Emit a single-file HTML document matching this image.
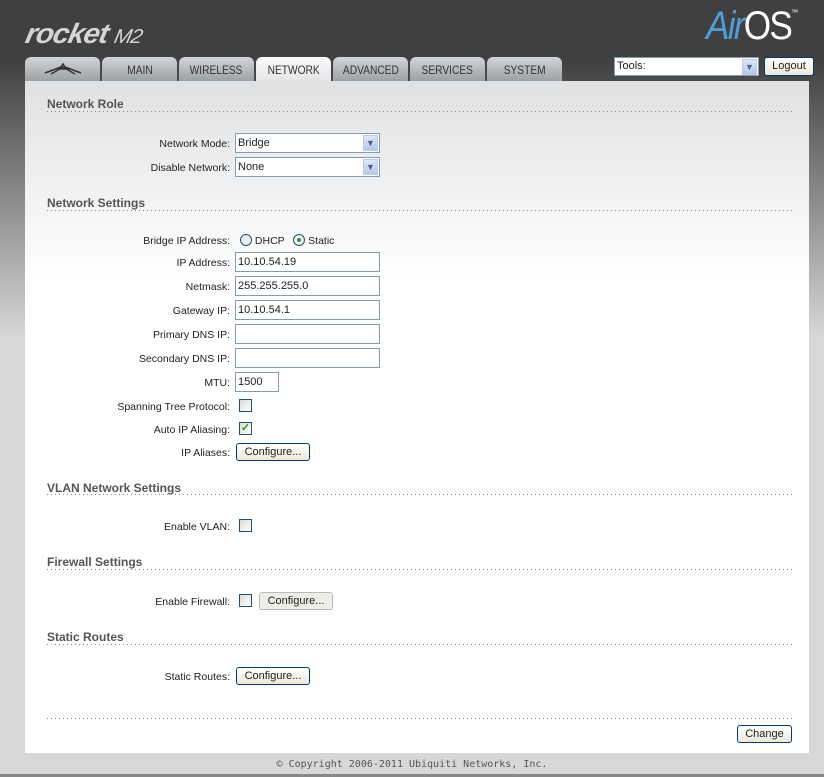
<!DOCTYPE html>
<html><head><meta charset="utf-8"><style>
*{box-sizing:border-box;margin:0;padding:0}
body{width:824px;height:777px;overflow:hidden;position:relative;font-family:"Liberation Sans",Tahoma,sans-serif;font-size:11px;color:#222;
background:linear-gradient(#404040 0,#404040 60px,#d8d8d8 340px,#d8d8d8 100%)}
.a{position:absolute}
.tab{position:absolute;top:57px;height:24px;width:75px;border-radius:6px 6px 0 0;background:linear-gradient(#d3d5d7,#9da0a4);color:#333;font-size:12px;text-align:center;line-height:26px}
.tab span{display:inline-block;transform:scaleX(.85)}
.tab.on{background:linear-gradient(#fafafa,#e2e4e6);height:25px}
#panel{position:absolute;left:25px;top:81px;width:784px;height:672px;background:linear-gradient(#dfe1e3 0,#fff 200px,#fff)}
.h{position:absolute;left:47px;font-weight:bold;font-size:12px;color:#555}
.dl{position:absolute;left:47px;width:748px;height:1px;background:repeating-linear-gradient(90deg,#888 0,#888 1px,transparent 1px,transparent 4px)}
.l{position:absolute;right:594px;text-align:right;white-space:nowrap;line-height:14px;font-size:10.5px}
.in{position:absolute;left:235px;width:145px;height:20px;border:1px solid #7f9db9;background:#fff;padding-left:2px;line-height:18px}
.sel .ar{position:absolute;right:1px;top:1px;width:15px;height:16px;background:linear-gradient(#dce6f8,#b4c8ec);border:1px solid #bccbe8;color:#4d6185;font-size:9px;text-align:center;line-height:14px}
.cb{position:absolute;left:239px;width:13px;height:13px;border:1px solid #1c5180;background:linear-gradient(135deg,#dcdcd4,#fff)}
.btn{position:absolute;height:18px;border:1px solid #003c74;border-radius:3px;background:linear-gradient(#fff,#ece9d8);text-align:center;line-height:16px;font-size:11px}
.rd{display:inline-block;width:12px;height:12px;border:1px solid #1c5180;border-radius:50%;vertical-align:-2px;background:#f0f0ea;position:relative}
</style></head><body>
<div class="a" style="left:26px;top:18px;font-size:28px;font-weight:bold;font-style:italic;color:#d4d4d4;letter-spacing:-1px;font-family:'Liberation Sans',sans-serif;transform:skewX(-12deg) scaleX(1.05);transform-origin:left">rocket <span style="font-size:20px;font-weight:normal">M2</span></div>
<div class="a" style="left:706px;top:4px;font-size:40px;font-family:'Liberation Sans',sans-serif;letter-spacing:-2px;transform:scaleX(.88);transform-origin:left"><span style="color:#4a9fd6;font-style:italic">Air</span><span style="color:#fff">OS</span><sup style="color:#fff;font-size:8px;vertical-align:24px">™</sup></div>
<div class="tab" style="left:25px"><svg width="40" height="14" viewBox="0 0 40 14" style="margin-top:5px"><path d="M2 11 L18 5 L20 2 L22 5 L38 11 M8 12 L20 5 L32 12 M14 7 L26 7" stroke="#333" stroke-width="1.5" fill="none"/></svg></div>
<div class="tab" style="left:102px"><span>MAIN</span></div>
<div class="tab" style="left:179px"><span>WIRELESS</span></div>
<div class="tab on" style="left:256px"><span>NETWORK</span></div>
<div class="tab" style="left:333px"><span>ADVANCED</span></div>
<div class="tab" style="left:410px"><span>SERVICES</span></div>
<div class="tab" style="left:487px"><span>SYSTEM</span></div>
<div class="in sel" style="left:614px;top:57px;width:145px;height:19px;line-height:17px">Tools:<div class="ar">▼</div></div>
<div class="btn" style="left:764px;top:57px;width:50px;height:19px">Logout</div>
<div id="panel"></div>

<div class="h" style="top:97px">Network Role</div><div class="dl" style="top:111px"></div>
<div class="l" style="top:137px">Network Mode:</div><div class="in sel" style="top:133px">Bridge<div class="ar">▼</div></div>
<div class="l" style="top:161px">Disable Network:</div><div class="in sel" style="top:157px">None<div class="ar">▼</div></div>

<div class="h" style="top:196px">Network Settings</div><div class="dl" style="top:210px"></div>
<div class="l" style="top:234px">Bridge IP Address:</div>
<div class="a" style="left:240px;top:234px;line-height:14px;font-size:10.5px"><span class="rd"></span> DHCP &nbsp;&nbsp;<span class="rd"><span style="position:absolute;left:3px;top:3px;width:4px;height:4px;border-radius:50%;background:#2a9a2a"></span></span> Static</div>
<div class="l" style="top:256px">IP Address:</div><div class="in" style="top:252px">10.10.54.19</div>
<div class="l" style="top:280px">Netmask:</div><div class="in" style="top:276px">255.255.255.0</div>
<div class="l" style="top:304px">Gateway IP:</div><div class="in" style="top:300px">10.10.54.1</div>
<div class="l" style="top:328px">Primary DNS IP:</div><div class="in" style="top:324px"></div>
<div class="l" style="top:352px">Secondary DNS IP:</div><div class="in" style="top:348px"></div>
<div class="l" style="top:376px">MTU:</div><div class="in" style="top:372px;width:44px">1500</div>
<div class="l" style="top:400px">Spanning Tree Protocol:</div><div class="cb" style="top:399px"></div>
<div class="l" style="top:423px">Auto IP Aliasing:</div><div class="cb" style="top:422px;color:#21a121;font-size:11px;line-height:10px;text-align:center;font-weight:bold">✓</div>
<div class="l" style="top:446px">IP Aliases:</div><div class="btn" style="left:236px;top:443px;width:74px">Configure...</div>

<div class="h" style="top:481px">VLAN Network Settings</div><div class="dl" style="top:494px"></div>
<div class="l" style="top:520px">Enable VLAN:</div><div class="cb" style="top:519px"></div>

<div class="h" style="top:555px">Firewall Settings</div><div class="dl" style="top:569px"></div>
<div class="l" style="top:595px">Enable Firewall:</div><div class="cb" style="top:594px"></div>
<div class="btn" style="left:259px;top:592px;width:74px;border-color:#bbb;background:#efeee6">Configure...</div>

<div class="h" style="top:630px">Static Routes</div><div class="dl" style="top:644px"></div>
<div class="l" style="top:670px">Static Routes:</div><div class="btn" style="left:236px;top:667px;width:74px">Configure...</div>

<div class="dl" style="top:718px"></div>
<div class="btn" style="left:737px;top:725px;width:55px">Change</div>
<div class="a" style="left:0;width:824px;top:759px;text-align:center;font-family:'DejaVu Sans Mono','Liberation Mono',monospace;font-size:10px;color:#555">© Copyright 2006-2011 Ubiquiti Networks, Inc.</div>
<div class="a" style="left:0;top:774px;width:824px;height:3px;background:#888"></div>
</body></html>
